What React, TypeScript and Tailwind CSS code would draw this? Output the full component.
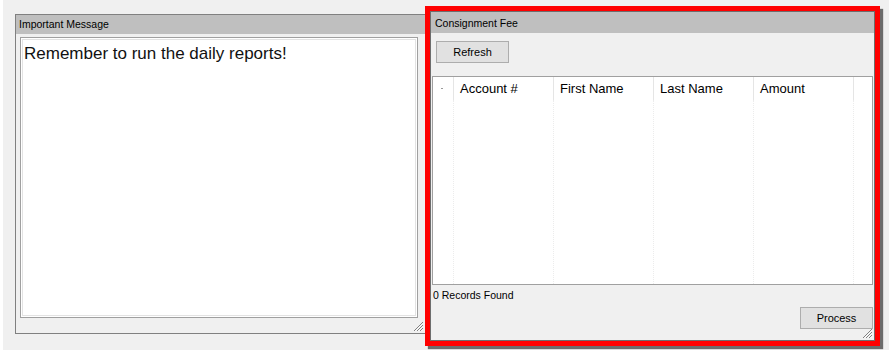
import React from "react";

function Grip() {
  return (
    <svg width="11" height="11" viewBox="0 0 11 11" className="absolute right-[1px] bottom-[1px]">
      <path d="M10 1 L1 10" stroke="#808080" strokeWidth="1" />
      <path d="M10 4 L4 10" stroke="#808080" strokeWidth="1" />
      <path d="M10 7 L7 10" stroke="#808080" strokeWidth="1" />
      <path d="M10 2.5 L2.5 10" stroke="#ffffff" strokeWidth="1" />
      <path d="M10 5.5 L5.5 10" stroke="#ffffff" strokeWidth="1" />
      <path d="M10 8.5 L8.5 10" stroke="#ffffff" strokeWidth="1" />
    </svg>
  );
}

function Col({ label }: { label: string }) {
  return (
    <div className="w-[100px] h-full flex flex-col shrink-0">
      <div className="h-[23px] border-r border-[#e5e5e5] pl-[6px] text-[13px] leading-[23px] text-black">
        {label}
      </div>
      <div className="flex-1 border-r border-dotted border-[#ececec]" />
    </div>
  );
}

export default function App() {
  return (
    <div
      className="w-[889px] h-[362px] bg-white overflow-hidden"
      style={{ fontFamily: '"Liberation Sans", Arial, sans-serif' }}
    >
      <div className="ml-[3px] w-[886px] h-[350px] bg-[#f0f0f0] flex items-start pl-[12px]">
        {/* Left panel */}
        <div className="relative mt-[14px] w-[410px] h-[320px] border border-r-0 border-[#808080] flex flex-col">
          <div className="h-[19px] bg-[#bfbfbf] pl-[3px] text-[10.5px] leading-[19px] text-black">
            Important Message
          </div>
          <div className="mt-[3px] ml-[4px] w-[398px] h-[281px] border border-[#a0a0a0] bg-white p-[1px]">
            <div className="w-full h-full border border-[#e3e3e3] bg-white px-[1px] pt-[4px] text-[17px] leading-[20px] text-[#111]">
              Remember to run the daily reports!
            </div>
          </div>
          <Grip />
        </div>

        {/* Right panel with red highlight */}
        <div className="mt-[6px] w-[455px] h-[340px] border-[5px] border-[#ff0000] shadow-[3px_3px_1px_rgba(0,0,0,0.55)] shrink-0">
          <div className="relative w-full h-full border border-[#6d6d6d] bg-[#f0f0f0] flex flex-col">
            <div className="h-[21px] bg-[#bfbfbf] pl-[4px] pt-[1px] text-[10.5px] leading-[21px] text-black">
              Consignment Fee
            </div>
            <div className="mt-[8px] ml-[5px] w-[73px] h-[22px] bg-[#e1e1e1] border border-[#adadad] flex items-center justify-center text-[11px] text-black">
              Refresh
            </div>
            <div className="mt-[13px] ml-[1px] w-[441px] h-[209px] border border-[#a0a0a0] bg-white flex">
              <div className="relative w-[21px] h-full flex flex-col shrink-0">
                <div className="h-[23px] border-r border-[#e5e5e5]" />
                <div className="flex-1 border-r border-dotted border-[#ececec]" />
                <div className="absolute left-[8px] top-[11px] w-[2px] h-[1px] bg-[#9a9a9a]" />
              </div>
              <Col label="Account #" />
              <Col label="First Name" />
              <Col label="Last Name" />
              <Col label="Amount" />
              <div className="flex-1" />
            </div>
            <div className="mt-[3px] ml-[2px] text-[10.5px] leading-[14px] text-black">
              0 Records Found
            </div>
            <div className="mt-[5px] self-end mr-[1px] w-[73px] h-[22px] bg-[#e1e1e1] border border-[#adadad] flex items-center justify-center text-[11px] text-black">
              Process
            </div>
            <Grip />
          </div>
        </div>
      </div>
    </div>
  );
}
